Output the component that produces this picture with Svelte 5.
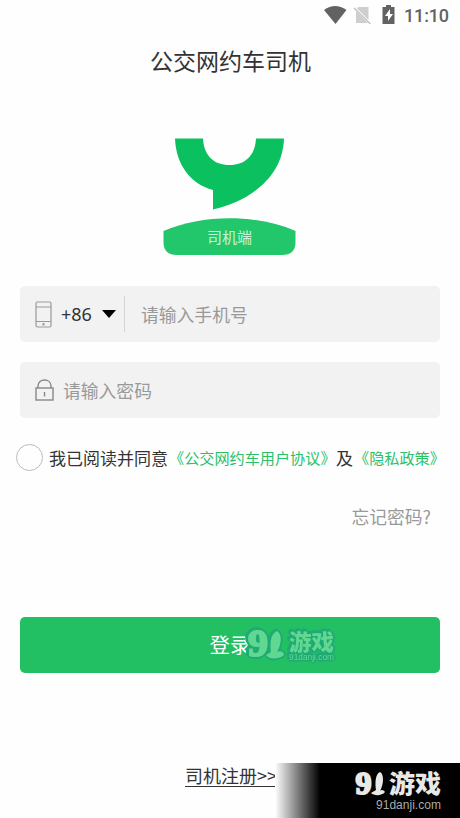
<script>
  const clock = '11:10';
</script>

<main>
  <header>
    <svg width="150" height="32" viewBox="310 0 150 32">
      <path fill="#626262" d="M324 10Q335 2 346.500 10L335.500 24Z" />
      <path fill="#cecece" d="M359 7H368.500V20L356.500 8ZM356 11L368 23H356Z" />
      <path stroke="#c4c4c4" stroke-width="1.500" d="M354 8L370.500 24" />
      <path fill="#626262" d="M386 5H391V7H394.500V24H382.500V7H386Z" />
      <path fill="#fff" d="M390 9L385 16H388V21L393 14H390Z" />
      <text x="404" y="22" textLength="45">{clock}</text>
    </svg>
  </header>
  <h1>公交网约车司机</h1>
  <svg class="logo" width="134" height="120" viewBox="163 137 134 120">
    <path fill="#0bc15f" d="M175 138.500H203C204 156 214 165 229.500 165C245 165 255 156 256 138.500H284C283 177 250 201 213 209.500V190C190 184 176 164 175 138.500Z" />
    <path fill="#22c76b" d="M163.500 231C203 214 256 214 295.500 231V242Q295.500 255 282 255H177Q163.500 255 163.500 242Z" />
    <text x="207" y="243" textLength="45">司机端</text>
  </svg>
  <div class="field phone">
    <svg width="17" height="27" viewBox="0 0 17 27" fill="none" stroke="#999" stroke-width="1.200">
      <rect x="1" y="1" width="15" height="25" rx="1.500" /><path d="M1 6H16M1 20.500H16" /><circle cx="8.500" cy="23.300" r=".6" />
    </svg>
    <span class="code">+86</span>
    <svg class="arrow" width="14" height="8"><path d="M0 0H14L7 8Z" /></svg>
    <i></i>
    <span>请输入手机号</span>
  </div>
  <div class="field password">
    <svg width="19" height="22" viewBox="0 0 19 22" fill="none" stroke="#888" stroke-width="1.400">
      <rect x="1" y="9" width="17" height="12" /><path d="M3 9V7C3-1 16-1 16 7V9M9.500 13V17.500" />
    </svg>
    <span>请输入密码</span>
  </div>
  <div class="agree">
    <b></b><span class="lead">我已阅读并同意</span><span class="terms">《公交网约车用户协议》</span><span class="and">及</span><span class="privacy">《隐私政策》</span>
  </div>
  <div class="forgot">忘记密码?</div>
  <div class="login">
    <span>登录</span>
    <svg class="ghost" viewBox="242 622 98 46" width="98" height="46">
      <g class="halo">
        <text class="nine" x="248" y="656" font-size="38" textLength="20" lengthAdjust="spacingAndGlyphs">9</text>
        <path d="M277 631C270 634 270 645 271 652L266 655C269 660 280 659 284 655C284 652 280 650 277 652C282 643 282 634 277 631Z" />
        <text class="game" x="289" y="650" font-size="22" textLength="45" lengthAdjust="spacingAndGlyphs">游戏</text>
        <text class="domain" x="289" y="660" font-size="8.500" textLength="45" lengthAdjust="spacingAndGlyphs">91danji.com</text>
      </g>
    </svg>
  </div>
  <footer>
    <span class="register">司机注册&gt;&gt;</span>
    <div class="brand">
      <svg viewBox="350 766 96 48" width="96" height="48">
        <g fill="#e8e8e8">
          <text class="nine" x="355.500" y="794" font-size="31" textLength="16" lengthAdjust="spacingAndGlyphs" stroke="#e8e8e8" stroke-width="2">9</text>
          <path d="M380 772C375 774 375 784 376 790L371 793C374 796 382 796 385 792C384 790 381 789 380 791C384 784 384 774 380 772Z" />
          <text class="game" x="389" y="793" font-size="25.500" textLength="52" lengthAdjust="spacingAndGlyphs">游戏</text>
          <text class="domain" x="376" y="809" font-size="12" textLength="65" lengthAdjust="spacingAndGlyphs" fill="#aaa">91danji.com</text>
        </g>
      </svg>
    </div>
  </footer>
</main>

<style>
  :global(body) { margin: 0; background: #fefefe; }
  main { width: 460px; height: 818px; display: flex; flex-direction: column; overflow: hidden; font-family: "Noto Sans CJK SC", sans-serif; color: #333; background: #fefefe; white-space: nowrap; }
  svg { display: block; flex: none; overflow: visible; }
  header { height: 32px; display: flex; justify-content: flex-end; }
  header text { font: 500 18px Roboto, sans-serif; fill: #626262; }
  h1 { margin: 11px 0 0 1px; height: 34px; line-height: 34px; text-align: center; font-size: 23px; font-weight: 400; }
  .logo { margin: 60px 0 0 163px; }
  .logo text { font-size: 15px; fill: #c5f5d9; }
  .field { box-sizing: border-box; width: 420px; height: 56px; margin-left: 20px; border-radius: 5px; background: #f2f2f2; display: flex; align-items: center; font-size: 17.800px; line-height: 26px; color: #999; }
  .field > span { padding-bottom: 1px; }
  .phone { margin-top: 29px; padding-left: 15px; }
  .code { width: 31px; margin-left: 9px; font-family: "Noto Sans", sans-serif; font-size: 18px; color: #333; }
  .arrow { margin-left: 10px; }
  .field i { width: 1px; height: 36px; margin: 0 16px 0 8px; background: #d5d5d5; }
  .password { margin-top: 20px; padding-left: 15px; }
  .password span { margin-left: 9px; }
  .agree { height: 30px; margin: 24px 0 0 16px; display: flex; align-items: center; }
  .agree b { box-sizing: border-box; width: 27px; height: 27px; border: 1.500px solid #bbb; border-radius: 50%; }
  .lead, .and { font-size: 17px; }
  .lead { width: 119px; margin-left: 6px; }
  .terms, .privacy { font-size: 15.150px; color: #28c16a; }
  .terms { width: 167px; margin-left: 1px; }
  .and { width: 18px; }
  .privacy { margin-left: 0; }
  .forgot { height: 26px; line-height: 26px; margin: 31px 29px 0 0; text-align: right; font-size: 17.800px; color: #999; }
  .login { position: relative; width: 420px; height: 56px; margin: 88px 0 0 20px; border-radius: 5px; background: #22c063; color: #fff; font-size: 20.500px; line-height: 54px; text-align: center; }
  .ghost { position: absolute; left: 222px; top: 5px; }
  .nine { font-family: "Liberation Serif", serif; font-weight: 700; }
  .game { font-weight: 900; }
  .domain { font-family: "Liberation Sans", sans-serif; }
  .halo { fill: #61d891; filter: drop-shadow(1.500px 1.500px 0 #20aa74) drop-shadow(-1.500px -1.500px 0 #20aa74) drop-shadow(1px -1px 0 #20aa74) drop-shadow(-1px 1px 0 #20aa74); }
  .halo .nine { stroke: #61d891; stroke-width: 2px; }
  footer { height: 55px; margin-top: 90px; display: flex; }
  .register { width: 90px; height: 22px; line-height: 22px; margin: 1px 0 0 185px; font-size: 18px; border-bottom: 1px solid #333; }
  .brand { flex: 1; padding: 3px 0 0 75px; background: linear-gradient(90deg, #fff 0, #777 24px, #000 45px); }
</style>
